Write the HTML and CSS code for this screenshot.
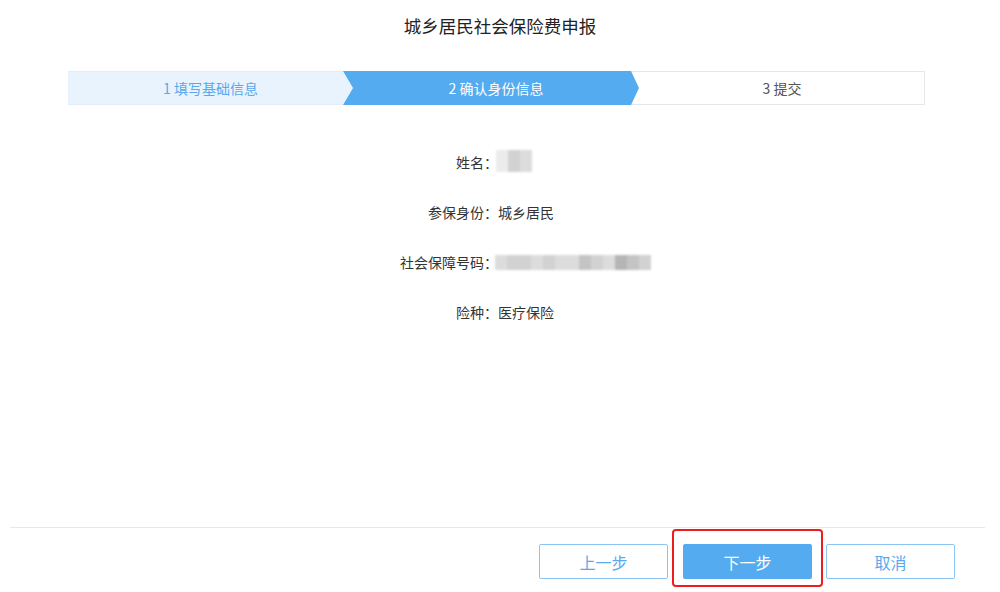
FILE: index.html
```html
<!DOCTYPE html>
<html lang="zh-CN">
<head>
<meta charset="utf-8">
<title>城乡居民社会保险费申报</title>
<link rel="stylesheet" href="styles.css">
</head>
<body>
<div class="page">
  <h1 class="title">城乡居民社会保险费申报</h1>
  <div class="steps">
    <div class="step step-done">1 填写基础信息</div>
    <div class="step step-active">2 确认身份信息</div>
    <div class="step step-todo">3 提交</div>
  </div>
  <div class="info">
    <div class="row"><span class="label">姓名：</span><span class="mosaic mosaic-name"><i class="c1"></i><i class="c3"></i><i class="c2"></i></span></div>
    <div class="row"><span class="label">参保身份：</span><span class="value">城乡居民</span></div>
    <div class="row"><span class="label">社会保障号码：</span><span class="mosaic mosaic-id"><i class="c2"></i><i class="c3"></i><i class="c3"></i><i class="c2"></i><i class="c3"></i><i class="c2"></i><i class="c2"></i><i class="c4"></i><i class="c3"></i><i class="c2"></i><i class="c5"></i><i class="c4"></i><i class="c3"></i></span></div>
    <div class="row"><span class="label">险种：</span><span class="value">医疗保险</span></div>
  </div>
  <div class="spacer"></div>
  <div class="footer">
    <button class="btn btn-outline">上一步</button>
    <div class="highlight"><button class="btn btn-primary">下一步</button></div>
    <button class="btn btn-outline">取消</button>
  </div>
</div>
</body>
</html>
```
FILE: styles.css
```css
* { box-sizing: border-box; }
html, body { margin: 0; padding: 0; background: #fff; }
body {
  font-family: "Noto Sans CJK SC", "Noto Sans", sans-serif;
  color: #333;
  width: 1000px;
  height: 592px;
  overflow: hidden;
}
.page {
  display: flex;
  flex-direction: column;
  height: 592px;
}
.title {
  margin: 0;
  padding-top: 13px;
  height: 71px;
  font-size: 17.5px;
  font-weight: normal;
  line-height: 26px;
  text-align: center;
  color: #222;
}
.steps {
  display: flex;
  margin-left: 68px;
  width: 857px;
  height: 34px;
}
.step {
  height: 34px;
  font-size: 14px;
  line-height: 34px;
  text-align: center;
}
.step-done {
  width: 285px;
  background: #e8f3fd;
  color: #5aa8ee;
  border-top: 1px solid #e3edf7;
  border-bottom: 1px solid #e3edf7;
  line-height: 32px;
  clip-path: polygon(0 0, calc(100% - 10px) 0, 100% 50%, calc(100% - 10px) 100%, 0 100%);
  position: relative;
  z-index: 1;
}
.step-active {
  width: 296px;
  margin-left: -10px;
  padding-left: 10px;
  background: #54abf0;
  color: #fff;
  clip-path: polygon(0 0, calc(100% - 8px) 0, 100% 50%, calc(100% - 8px) 100%, 0 100%, 10px 50%);
  position: relative;
  z-index: 2;
}
.step-todo {
  flex: 1;
  margin-left: -9px;
  padding-left: 10px;
  background: #fff;
  color: #555;
  border: 1px solid #e6e6ea;
  border-left: none;
  line-height: 32px;
}
.info {
  display: flex;
  flex-direction: column;
  margin-top: 32px;
}
.row {
  display: flex;
  align-items: center;
  height: 50px;
  font-size: 14px;
}
.label {
  width: 498px;
  text-align: right;
  color: #333;
}
.value { color: #333; }
.mosaic {
  display: flex;
  height: 18px;
  filter: blur(1.2px);
}
.mosaic i { display: block; width: 12px; height: 18px; }
.mosaic-name { height: 22px; margin-left: -2px; margin-top: -2px; }
.mosaic-name i { height: 22px; }
.mosaic-id { height: 15px; margin-left: -3px; }
.mosaic-id i { height: 15px; }
.c1 { background: #ececec; }
.c2 { background: #dcdcdc; }
.c3 { background: #d2d2d2; }
.c4 { background: #c4c4c4; }
.c5 { background: #b5b5b5; }
.spacer { flex: 1; }
.footer {
  margin: 0 15px 0 10px;
  border-top: 1px solid #e8e8e8;
  height: 65px;
  display: flex;
  align-items: flex-start;
  justify-content: flex-end;
  padding-right: 30px;
}
.btn {
  width: 129px;
  height: 35px;
  font-family: inherit;
  font-size: 16px;
  border-radius: 2px;
  cursor: pointer;
}
.btn-outline {
  margin-top: 16px;
  background: #fff;
  color: #5aa8ee;
  border: 1px solid #8cc5f4;
}
.btn-primary {
  background: #54abf0;
  color: #fff;
  border: none;
}
.highlight {
  margin: 1px 3px 0 4px;
  padding: 13px 9px 0 9px;
  border: 2px solid #ee1c1c;
  border-radius: 4px;
  display: flex;
  height: 58px;
  align-items: flex-start;
}
```
